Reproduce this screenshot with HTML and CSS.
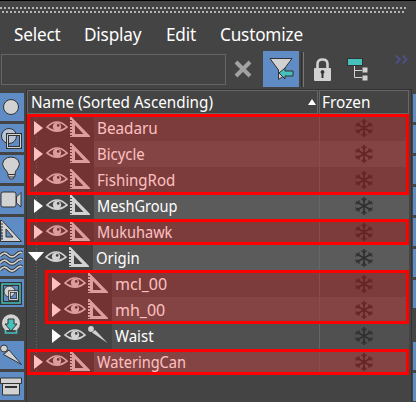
FILE: index.html
```html
<!DOCTYPE html>
<html lang="en">
<head>
<meta charset="utf-8">
<title>Scene Explorer</title>
<link rel="stylesheet" href="styles.css">
</head>
<body>
<svg class="defs" aria-hidden="true">
  <defs>
    <symbol id="eye" viewBox="0 0 22 14"><path d="M1 7Q11-3 21 7Q11 15 1 7Z" fill="none" stroke="currentColor" stroke-width="1.7"/><circle cx="11" cy="6.7" r="4.2" fill="currentColor"/><circle cx="12.2" cy="5.4" r="1.3" fill="#444"/></symbol>
    <symbol id="ruler" viewBox="0 0 20 20"><path fill="currentColor" fill-rule="evenodd" d="M0 0H1.500L20 19V20H0V19H2V18H0V16H2V15H0V13H2V12H0V10H2V9H0V7H2V6H0V4H2V3H0ZM5 8V17H13.500Z"/></symbol>
    <symbol id="bone" viewBox="0 0 20 18"><circle cx="3" cy="3" r="2.900" fill="currentColor"/><path d="M4 6.500L7.200 4L19.500 17Z" fill="currentColor"/></symbol>
    <symbol id="flake" viewBox="0 0 18 18"><path fill="none" stroke="#303030" stroke-width="1.600" d="M9 0V18M1 4.500L17 13.500M17 4.500L1 13.500"/><path fill="none" stroke="#303030" stroke-width="1.100" d="M6.500 1.500L9 4L11.500 1.500M6.500 16.500L9 14L11.500 16.500M4 3V6.500L0 7M14 3V6.500L18 7M4 15V11.500L0 11M14 15V11.500L18 11"/></symbol>
  </defs>
</svg>
<div class="window">
  <div class="grip"><i></i><i></i></div>
  <nav class="menu"><span class="m1">Select</span><span class="m2">Display</span><span class="m3">Edit</span><span class="m4">Customize</span></nav>
  <div class="toolbar">
    <div class="search"></div>
    <svg class="clear" viewBox="0 0 18 18"><path d="M2 2L16 16M16 2L2 16" stroke="#a2a2a2" stroke-width="4"/></svg>
    <div class="filter"><svg viewBox="0 0 36 36"><path d="M7 7.500H29L20.500 19V25L15.500 28.500V19Z" fill="#d2d2d2" stroke="#333"/><path d="M16 22L22 17V20H30V25H22V28Z" fill="#45c0bd" stroke="#333"/></svg></div>
    <div class="divider"></div>
    <svg class="lock" viewBox="0 0 17 23"><path d="M3.500 11V6Q3.500 1.500 8.500 1.500T13.500 6V11" fill="none" stroke="#d2d2d2" stroke-width="2.600"/><rect y="10" width="17" height="13" rx="1" fill="#d2d2d2"/><path d="M8.500 12a2 2 0 0 1 1 3.700V20h-2v-4.300a2 2 0 0 1 1-3.700" fill="#333"/></svg>
    <svg class="tree" viewBox="0 0 22 23"><path d="M7.500 7V19.500H15M7.500 12.500H15" fill="none" stroke="#d2d2d2"/><rect x=".5" y=".5" width="15" height="7" fill="#45c0bd" stroke="#333"/><path d="M15.500 9.500h5v5h-5zM15.500 17.500h5v5h-5z" fill="#d2d2d2"/></svg>
    <svg class="more" viewBox="0 0 13 9"><path d="M1 .5L5 4.500L1 8.500M7.500 .5L11.500 4.500L7.500 8.500" fill="none" stroke="#50508c" stroke-width="1.800"/></svg>
  </div>
  <main class="body">
    <aside class="side">
      <div class="tool"><svg viewBox="0 0 24 28"><circle cx="11" cy="14" r="7.500" fill="#d2d2d2" stroke="#333"/></svg></div>
      <div class="tool"><svg viewBox="0 0 24 28"><circle cx="9" cy="12" r="7.500" fill="#b9c5d6" stroke="#333"/><path d="M7.500 10.500h13v13h-13z" fill="none" stroke="#333" stroke-width="3"/><path d="M7.500 10.500h13v13h-13z" fill="none" stroke="#d2d2d2"/></svg></div>
      <div class="tool"><svg viewBox="0 0 24 28"><path d="M8 21V19Q7 16 4 13Q1 9 4 5Q7 2 11 2T18 5Q21 9 18 13Q15 16 15 19V21L13 24H10Z" fill="#d2d2d2" stroke="#333"/><path d="M8 19.500H15M9 22H14" stroke="#333"/></svg></div>
      <div class="tool"><svg viewBox="0 0 24 28"><rect x="1" y="6" width="15" height="15" rx="2" fill="#d2d2d2" stroke="#333"/><path d="M16.500 11L21 6.500V21L16.500 17Z" fill="#d2d2d2" stroke="#333"/></svg></div>
      <div class="tool"><svg viewBox="0 0 24 28"><path fill="#d2d2d2" stroke="#333" fill-rule="evenodd" d="M.5 3.500H2L21.500 24.500H.5V22H3M.5 19H3M.5 16H3M.5 13H3M.5 10H3M.5 7H3M.5 3V24M6 12V20H13Z"/></svg></div>
      <div class="tool"><svg viewBox="0 0 24 28"><path d="M0 8Q4 3 8 7T16 7T22 5M0 15Q4 10 8 14T16 14T22 12M0 22Q4 17 8 21T16 21T22 19" fill="none" stroke="#333" stroke-width="3.500"/><path d="M0 8Q4 3 8 7T16 7T22 5M0 15Q4 10 8 14T16 14T22 12M0 22Q4 17 8 21T16 21T22 19" fill="none" stroke="#d2d2d2" stroke-width="1.700"/></svg></div>
      <div class="tool"><svg viewBox="0 0 24 28"><rect x="2" y="5" width="18" height="19" fill="none" stroke="#333" stroke-width="4"/><rect x="2" y="5" width="18" height="19" fill="none" stroke="#45c0bd" stroke-width="1.500"/><circle cx="9.500" cy="12.500" r="5.500" fill="#d2d2d2" stroke="#333"/><path d="M9.500 12.500h8v8h-8z" fill="none" stroke="#333" stroke-width="2.500"/><path d="M9.500 12.500h8v8h-8z" fill="none" stroke="#d2d2d2"/></svg></div>
      <div class="tool plain"><svg viewBox="0 0 24 28"><path d="M5 20A9 9 0 1 1 17 20" fill="#d2d2d2"/><path d="M8 9H14V14H17L11 21L5 14H8Z" fill="#45c0bd" stroke="#333"/><path d="M5.500 20V23H16.500V20" fill="none" stroke="#45c0bd" stroke-width="1.700"/></svg></div>
      <div class="tool"><svg viewBox="0 0 24 28"><circle cx="4" cy="7.500" r="3.500" fill="#d2d2d2" stroke="#333"/><path d="M3.500 13.500L9 9L21.500 23.500Z" fill="#d2d2d2" stroke="#333"/></svg></div>
      <div class="tool"><svg viewBox="0 0 24 28"><path d="M2.500 11.500H19.500V23H2.500ZM.5 6H21.500V11.500H.5Z" fill="#d2d2d2" stroke="#333"/><path d="M5 15H17" stroke="#333" stroke-width="2"/></svg></div>
    </aside>
    <section class="table">
      <header class="head"><div class="hname"><div class="ht"><span class="w95">Name (Sorted Ascending)</span></div><b></b></div><div class="hfrozen"><span class="w96">Frozen</span></div></header>
      <div class="row"><u></u><svg class="eye"><use href="#eye"/></svg><svg class="rul"><use href="#ruler"/></svg><div class="cell"><span class="w95">Beadaru</span></div><div class="fz"><svg><use href="#flake"/></svg></div></div>
      <div class="row"><u></u><svg class="eye"><use href="#eye"/></svg><svg class="rul"><use href="#ruler"/></svg><div class="cell"><span class="w92">Bicycle</span></div><div class="fz"><svg><use href="#flake"/></svg></div></div>
      <div class="row"><u></u><svg class="eye"><use href="#eye"/></svg><svg class="rul"><use href="#ruler"/></svg><div class="cell"><span class="w94">FishingRod</span></div><div class="fz"><svg><use href="#flake"/></svg></div></div>
      <div class="row"><u></u><svg class="eye"><use href="#eye"/></svg><svg class="rul"><use href="#ruler"/></svg><div class="cell"><span class="w91">MeshGroup</span></div><div class="fz"><svg><use href="#flake"/></svg></div></div>
      <div class="row"><u></u><svg class="eye"><use href="#eye"/></svg><svg class="rul"><use href="#ruler"/></svg><div class="cell"><span class="w91">Mukuhawk</span></div><div class="fz"><svg><use href="#flake"/></svg></div></div>
      <div class="row open"><u></u><svg class="eye"><use href="#eye"/></svg><svg class="rul"><use href="#ruler"/></svg><div class="cell"><span class="w92">Origin</span></div><div class="fz"><svg><use href="#flake"/></svg></div></div>
      <div class="row child"><u></u><svg class="eye"><use href="#eye"/></svg><svg class="rul"><use href="#ruler"/></svg><div class="cell"><span>mcl_00</span></div><div class="fz"><svg><use href="#flake"/></svg></div></div>
      <div class="row child"><u></u><svg class="eye"><use href="#eye"/></svg><svg class="rul"><use href="#ruler"/></svg><div class="cell"><span>mh_00</span></div><div class="fz"><svg><use href="#flake"/></svg></div></div>
      <div class="row child"><u></u><svg class="eye"><use href="#eye"/></svg><svg class="rul"><use href="#bone"/></svg><div class="cell"><span class="w94">Waist</span></div><div class="fz"><svg><use href="#flake"/></svg></div></div>
      <div class="row"><u></u><svg class="eye"><use href="#eye"/></svg><svg class="rul"><use href="#ruler"/></svg><div class="cell"><span class="w91">WateringCan</span></div><div class="fz"><svg><use href="#flake"/></svg></div></div>
      <div class="mark k1"></div><div class="mark k2"></div><div class="mark k3"></div><div class="mark k4"></div>
    </section>
    <aside class="right"><p></p><p></p><p></p><p></p><p></p><p></p><p></p><p class="plain"></p><p></p><p></p></aside>
  </main>
</div>
</body>
</html>
```
FILE: styles.css
```css
* { box-sizing: border-box; }
body { margin: 0; background: #444; color: #fff; font: 16px/26px "Noto Sans", sans-serif; overflow: hidden; }
svg { display: block; }
.defs { position: absolute; width: 0; height: 0; }
.window { width: 416px; height: 402px; border-top: 1px solid #000; display: flex; flex-direction: column; overflow: hidden; }
.grip { height: 21px; padding-top: 6px; width: 406px; display: flex; flex-direction: column; gap: 2px; flex: none; }
.grip i { height: 2px; background: repeating-linear-gradient(90deg, #b4b4b4 0 2px, transparent 2px 4px); }
.grip i + i { margin-left: 2px; margin-right: 2px; }
.menu { height: 29px; display: flex; padding-left: 14px; font-size: 18px; line-height: 25px; white-space: nowrap; flex: none; }
.menu span { flex: none; transform: scaleX(.955); transform-origin: 0 50%; letter-spacing: -0.2px; }
.m1 { width: 70px; }
.m2 { width: 82px; }
.m3 { width: 54px; }
.toolbar { height: 38px; display: flex; align-items: flex-start; flex: none; }
.search { width: 225px; height: 31px; margin: 3px 0 0 1px; border: 1px solid #666; flex: none; }
.clear { width: 18px; height: 18px; margin: 9px 0 0 8px; }
.filter { width: 36px; height: 36px; margin-left: 11px; background: #5f8cc4; }
.divider { width: 3px; height: 35px; margin: 1px 0 0 2px; border-left: 1px solid #2e2e2e; border-right: 1px solid #777; }
.lock { width: 17px; height: 23px; margin: 7px 0 0 10px; }
.tree { width: 22px; height: 23px; margin: 7px 0 0 16px; }
.more { width: 13px; height: 9px; margin: 4px 0 0 26px; }
.body { display: flex; flex: none; height: 313px; }
.side { width: 24px; display: flex; flex-direction: column; gap: 3px; padding-top: 4px; flex: none; }
.tool { height: 28px; background: #5f8cc4; flex: none; }
.tool svg { width: 24px; height: 28px; }
.tool.plain { background: none; }
.table { position: relative; width: 386px; margin-left: 2px; padding-right: 1px; border: 1px solid #333; border-bottom: 0; flex: none; }
.table span { display: inline-block; transform-origin: 0 50%; white-space: nowrap; }
.table .w91 { transform: scaleX(.91); }
.table .w92 { transform: scaleX(.93); }
.table .w94 { transform: scaleX(.94); }
.table .w95 { transform: scaleX(.953); }
.table .w96 { transform: scaleX(.96); }
.head { height: 25px; display: flex; gap: 1px; line-height: 22px; }
.hname { width: 291px; height: 24px; border: 1px solid #666; padding-left: 3px; display: flex; align-items: center; }
.ht { width: 277px; }
.hname b { border: 4px solid transparent; border-top: 0; border-bottom: 6px solid #fff; }
.hfrozen { width: 90px; height: 24px; border: 1px solid #666; padding-left: 2px; }
.row { height: 26px; display: flex; align-items: center; padding-left: 7px; background: repeating-linear-gradient(#666 0 1px, #444 1px 3px) 9px 0 / 1px 24px repeat-y; }
.row svg { color: #d2d2d2; flex: none; }
.row u { border: 7px solid transparent; border-left: 9px solid #fff; border-right: 0; flex: none; }
.open u { border: 8.5px solid transparent; border-top: 9px solid #fff; border-bottom: 0; margin: -4px -2px 0 -6px; }
.eye { width: 22px; height: 14px; margin-left: 3px; margin-top: -3px; }
.rul { width: 20px; height: 20px; margin-left: 2px; margin-top: -2px; }
.cell { background: #505050; flex: 1; height: 26px; margin-left: 4px; padding-left: 3px; border-right: 1px solid #666; line-height: 26px; }
.fz { width: 89px; height: 26px; background: #505050; padding: 4px 0 0 35px; margin-right: 1px; }
.fz svg { width: 18px; height: 18px; }
.row:nth-of-type(even) .cell, .row:nth-of-type(even) .fz { background: #5b5b5b; }
.child { padding-left: 25px; }
.mark { position: absolute; left: 0; width: 382px; border: 3px solid #f00; background: rgba(255,0,0,.25); background-clip: padding-box; }
.k1 { top: 24px; height: 81px; }
.k2 { top: 129px; height: 26px; }
.k3 { top: 180px; left: 18px; width: 364px; height: 54px; }
.k4 { top: 259px; height: 26px; }
.right { width: 3px; margin-left: 1px; padding-top: 5px; display: flex; flex-direction: column; gap: 3px; }
.right p { margin: 0; height: 28px; background: #5f8cc4; flex: none; }
.right p.plain { background: none; }
```
